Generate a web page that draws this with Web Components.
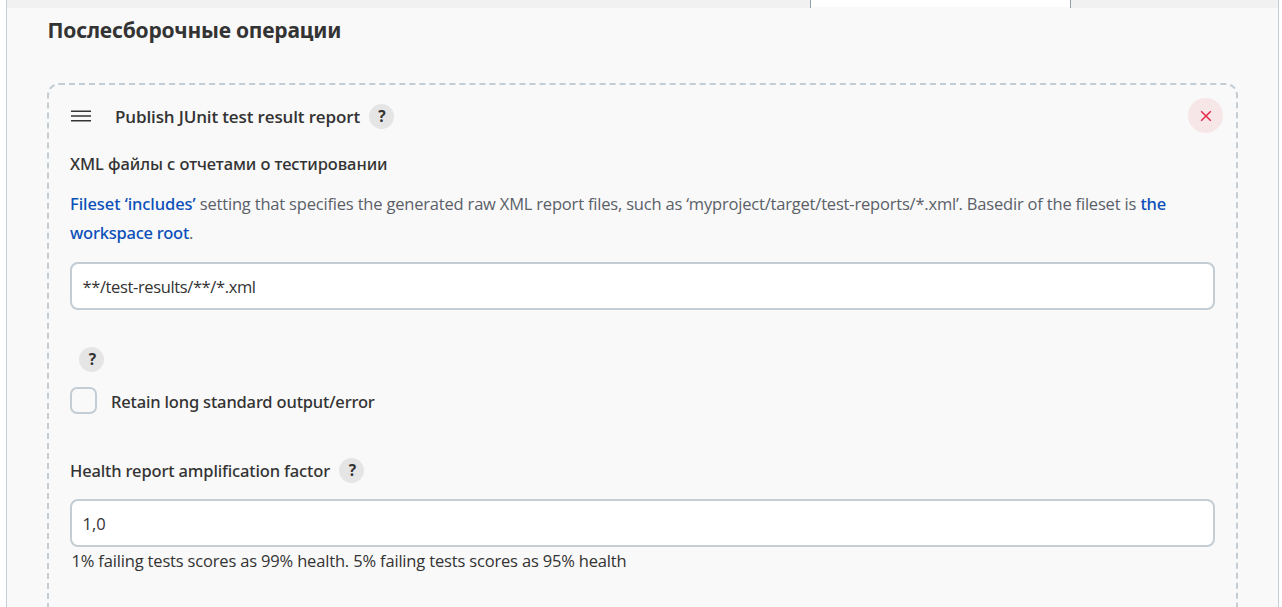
<!DOCTYPE html>
<html lang="ru">
<head>
<meta charset="utf-8">
<title>Послесборочные операции</title>
<style>
html, body { margin: 0; height: 607px; overflow: hidden; background: #fff; }
body { font-family: "Open Sans", "Noto Sans", sans-serif; font-size: 16.5px; color: #333; }
</style>
</head>
<body>
<config-page>
  <tab-strip slot="tabs"></tab-strip>
  <section-title>Послесборочные операции</section-title>
  <repeat-chunk>
    <span slot="title">Publish JUnit test result report</span>
    <form-field>
      <fit-text slot="label" style="--ls:-.08px">XML файлы с отчетами о тестировании</fit-text>
      <field-note slot="note"></field-note>
      <text-box><fit-text style="--ls:-.375px">**/test-results/**/*.xml</fit-text></text-box>
    </form-field>
    <check-row>Retain long standard output/error</check-row>
    <factor-field></factor-field>
  </repeat-chunk>
</config-page>
<script>
const define = (name, html) => customElements.define(name, class extends HTMLElement {
  constructor() {
    super();
    const t = document.createElement('template');
    t.innerHTML = html;
    this.attachShadow({ mode: 'open' }).append(t.content.cloneNode(true));
  }
});

define('fit-text', `<style>:host{display:inline-block;white-space:nowrap;letter-spacing:var(--ls,0)}</style><slot></slot>`);

define('config-page', `<style>
:host{display:flex;flex-direction:column;box-sizing:border-box;width:1273px;height:607px;margin-left:6px;background:#f9f9f9;border:solid #c3cdd3;border-width:0 1px;overflow:hidden}
main{padding:0 40px}
</style><slot name="tabs"></slot><main><slot></slot></main>`);

define('tab-strip', `<style>
:host{display:flex;height:8px;background:#f1f1f1}
i{box-sizing:border-box;width:261px;height:8px;margin-left:803px;background:linear-gradient(#fff 7px,#f9f9f9 7px);border:solid #8fa2ac;border-width:0 1px}
</style><i></i>`);

define('section-title', `<style>
:host{display:block;box-sizing:border-box;height:75px;padding-left:.5px;font:700 21px/44px "Noto Sans",sans-serif;letter-spacing:-.2px;white-space:nowrap}
</style><slot></slot>`);

define('help-dot', `<style>
:host{display:grid;place-items:center;flex:none;width:25px;height:25px;border-radius:50%;background:#e5e5e5;font:700 15.5px/25px "Open Sans",sans-serif}
span{padding-left:2px}
</style><span>?</span>`);

define('repeat-chunk', `<style>
:host{display:block;box-sizing:border-box;width:1191px;height:560px;border:2px dashed #c3cdd3;border-radius:12px;padding:13px 13px 0 21px}
header{display:flex;align-items:center;height:35px;margin-bottom:15px}
.grip{width:20px;height:12px;margin:1px 24px 0 1px;flex:none}
.name{font-size:17px;font-weight:600;letter-spacing:-.137px;white-space:nowrap;margin:2px 8.5px 0 0}
help-dot{margin-top:2px}
.del{margin-left:auto;width:35px;height:35px;border-radius:50%;background:#f7e6e8;display:grid;place-items:center}
</style>
<header>
<svg class="grip" viewBox="0 0 20 12"><path d="M0 1.2h20M0 6h20M0 10.8h20" stroke="#333" stroke-width="1.6"/></svg>
<span class="name"><slot name="title"></slot></span><help-dot></help-dot>
<span class="del"><svg width="12" height="12" viewBox="0 0 12 12"><path d="M1.2 1.2l9.6 9.6M10.8 1.2l-9.6 9.6" stroke="#e6284a" stroke-width="1.5"/></svg></span>
</header><slot></slot>`);

define('form-field', `<style>
:host{display:block;width:1145px}
.label{height:32px;font:500 16.5px/32px "Noto Sans",sans-serif}
</style><div class="label"><slot name="label"></slot></div><slot name="note"></slot><slot></slot>`);

define('field-note', `<style>
:host{display:block;margin:9px 0 15px;line-height:29px;color:#5a6068}
div{white-space:nowrap;height:29px}
b{font-family:"Noto Sans",sans-serif;font-weight:500;color:#0b50b8}
</style><div><b><fit-text style="--ls:-.07px">Fileset ‘includes’</fit-text></b> <fit-text style="--ls:-.19px">setting that specifies the generated raw XML report files, such as ‘myproject/target/test-reports/*.xml’. Basedir of the fileset is</fit-text> <b><fit-text style="--ls:-.15px">the</fit-text></b></div>
<div><b><fit-text style="--ls:-.23px">workspace root</fit-text></b>.</div>`);

define('text-box', `<style>
:host{display:flex;align-items:center;box-sizing:border-box;width:1145px;height:48px;border:2px solid #c3cdd3;border-radius:8px;background:#fff;padding:0 10.5px}
</style><slot></slot>`);

define('check-row', `<style>
:host{display:block;margin-top:37px}
help-dot{margin-left:9px}
label{display:flex;align-items:center;gap:14px;margin-top:15px;height:27px;font-family:"Noto Sans",sans-serif;font-weight:500}
i{box-sizing:border-box;width:27px;height:27px;border:2px solid #c3cdd3;border-radius:7px}
fit-text{--ls:-.17px;margin-top:2px}
</style><help-dot></help-dot><label><i></i><fit-text><slot></slot></fit-text></label>`);

define('factor-field', `<style>
:host{display:block;margin-top:43px}
.label{display:flex;align-items:center;gap:9px;height:26px;margin-bottom:16px;font-family:"Noto Sans",sans-serif;font-weight:500}
.label fit-text{--ls:-.15px}
p{margin:0 0 0 1.5px;line-height:28px}
</style><div class="label"><fit-text>Health report amplification factor</fit-text><help-dot></help-dot></div>
<text-box><fit-text>1,0</fit-text></text-box>
<p><fit-text style="--ls:-.17px">1% failing tests scores as 99% health. 5% failing tests scores as 95% health</fit-text></p>`);
</script>
</body>
</html>
